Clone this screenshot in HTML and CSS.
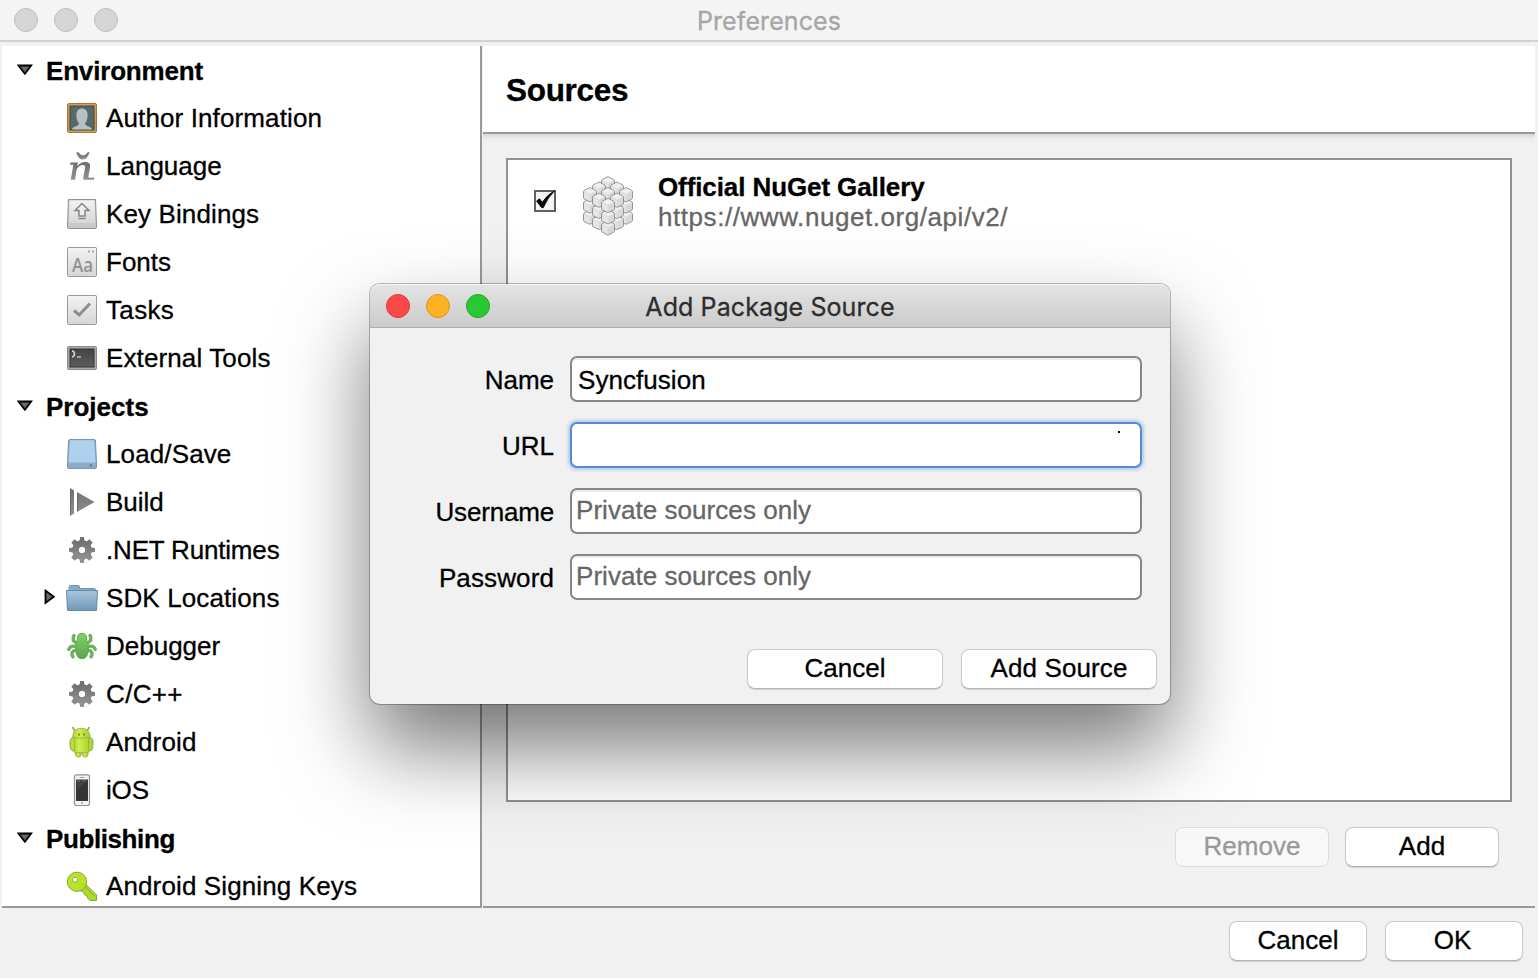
FILE: index.html
```html
<!DOCTYPE html>
<html lang="en">
<head>
<meta charset="utf-8">
<title>Preferences</title>
<link rel="stylesheet" href="styles.css">
</head>
<body>
<svg class="defs" width="0" height="0" aria-hidden="true">
  <defs>
    <linearGradient id="gGray" x1="0" y1="0" x2="0" y2="1"><stop offset="0" stop-color="#6e6e6e"/><stop offset="1" stop-color="#929292"/></linearGradient>
    <linearGradient id="gLight" x1="0" y1="0" x2="0" y2="1"><stop offset="0" stop-color="#f3f3f3"/><stop offset="1" stop-color="#d6d6d6"/></linearGradient>
    <linearGradient id="gGold" x1="0" y1="0" x2="0" y2="1"><stop offset="0" stop-color="#d9a055"/><stop offset=".85" stop-color="#c98d45"/><stop offset="1" stop-color="#dba65c"/></linearGradient>
    <linearGradient id="gFolder" x1="0" y1="0" x2="0" y2="1"><stop offset="0" stop-color="#a9c6dc"/><stop offset="1" stop-color="#7099ba"/></linearGradient>
    <linearGradient id="gBug" x1="0" y1="0" x2="0" y2="1"><stop offset="0" stop-color="#7cd36a"/><stop offset="1" stop-color="#5ba34c"/></linearGradient>
    <linearGradient id="gDroid" x1="0" y1="0" x2="1" y2="0"><stop offset="0" stop-color="#b0d52f"/><stop offset=".35" stop-color="#d0ee52"/><stop offset="1" stop-color="#a9d028"/></linearGradient>
    <linearGradient id="gDark" x1="0" y1="0" x2="0" y2="1"><stop offset="0" stop-color="#444"/><stop offset="1" stop-color="#5d5d5d"/></linearGradient>
    <symbol id="gear" viewBox="0 0 32 32">
      <g fill="url(#gGray)">
        <path fill-rule="evenodd" d="M14.2 3h3.6l.6 3.5 2.2.9 2.9-2.1 3.2 3.2-2.1 2.9.9 2.2 3.5.6v3.6l-3.5.6-.9 2.2 2.1 2.9-3.2 3.2-2.9-2.1-2.2.9-.6 3.5h-3.6l-.6-3.5-2.2-.9-2.9 2.1-3.2-3.2 2.1-2.9-.9-2.2L3 17.800v-3.600l3.500-.6.9-2.2-2.100-2.900 3.200-3.200 2.900 2.100 2.200-.9zM16 12.800a3.200 3.200 0 1 0 0 6.400a3.200 3.200 0 0 0 0-6.400z"/>
        <path fill-rule="evenodd" d="M16 6.300a9.700 9.700 0 1 0 0 19.400a9.700 9.700 0 0 0 0-19.400zM16 12.800a3.200 3.200 0 1 1 0 6.400a3.200 3.200 0 0 1 0-6.400z"/>
      </g>
    </symbol>
    <g id="cube">
      <path d="M0-6.900 5.700-4.100Q6.500-3.600 6.500-2.800V3.200Q6.500 4.100 5.700 4.500L.8 7Q0 7.300-.8 7L-5.700 4.500Q-6.500 4.100-6.500 3.200V-2.800Q-6.500-3.600-5.700-4.100z" fill="#dcdcdc" stroke="#8b8b8b" stroke-width=".9"/>
      <path d="M0-6.200 5.500-3.400 0-.5-5.500-3.400z" fill="#f0f0f0"/>
      <path d="M.5.5 5.800-2.200V3.500L.5 6.300z" fill="#d8d8d8"/>
      <path d="M-.5.500-5.800-2.200V3.500L-.5 6.300z" fill="#e6e6e6"/>
    </g>
  </defs>
</svg>

<div class="window">
  <header class="titlebar">
    <span class="lights"><i class="light"></i><i class="light"></i><i class="light"></i></span>
    <span class="title">Preferences</span>
  </header>

  <main class="content">
    <nav class="sidebar">
      <div class="row group"><svg class="tri" width="16" height="12"><path d="M1.500 1.500H14.200L7.900 9.800z" fill="#666" stroke="#000" stroke-width="1.800"/></svg><b class="tight">Environment</b></div>

      <div class="row"><svg class="icon" viewBox="0 0 32 32">
        <rect x="1.500" y="1.500" width="29" height="29" rx="1.500" fill="url(#gGold)" stroke="#a9773b"/>
        <rect x="4" y="4" width="24" height="24" fill="#55686d" stroke="#3f4a4b"/>
        <path d="M4.500 9Q10 6 16 9T27.500 9M4.500 14Q10 11 16 14T27.500 14M4.500 19Q10 16 16 19T27.500 19" fill="none" stroke="#5b6f73"/>
        <path d="M6 27.500C6 24.500 12.800 24.500 13 21.500C11.400 19.800 10.400 17 10.400 13C10.400 8.800 12.600 6.600 16 6.600S21.600 8.800 21.600 13C21.600 17 20.600 19.800 19 21.500C19.200 24.500 26 24.500 26 27.500z" fill="#b6c1c2"/>
      </svg><span class="loose">Author Information</span></div>

      <div class="row"><svg class="icon" viewBox="0 0 32 32">
        <g fill="url(#gGray)">
          <path d="M10.300 2.200H12.300Q14.500 5.300 18 5.200Q20.200 4.600 21.700 2.200H23.600Q21.500 9.400 16.800 9.600Q12.200 9.500 10.300 2.200z"/>
          <path d="M4.500 12.400H12L11.300 16.200Q14.500 12.100 19.300 12Q24.800 12 24.100 17L22.400 26.300Q22.200 27.700 23.400 27.700L28.400 27.600L28 29.800H18.300Q16.900 29.600 17.200 27.800L19 18Q19.500 15 17 15Q13.200 15 10.700 19.600L9 29.800H4.700L7.400 14.700H4z"/>
        </g>
      </svg><span>Language</span></div>

      <div class="row"><svg class="icon" viewBox="0 0 32 32">
        <path d="M2.500 1.500H29.500L30.500 27V29Q30.500 30.500 29 30.500H3Q1.500 30.500 1.500 29V27z" fill="#c9c9c9" stroke="#929292"/>
        <path d="M3.500 2.500H28.500L29.200 25H2.800z" fill="url(#gLight)"/>
        <path d="M16 5.500 23 12.500H19V18H13V12.500H9z" fill="#eee" stroke="#858585" stroke-width="1.500"/><path d="M12.500 20.500H19.500" stroke="#858585" stroke-width="1.500"/>
      </svg><span class="loose">Key Bindings</span></div>

      <div class="row"><svg class="icon" viewBox="0 0 32 32">
        <rect x="1.500" y="1.500" width="29" height="29" rx="1" fill="url(#gLight)" stroke="#999"/>
        <path d="M22 4.500h2v2h-2zM26 4.500h2v2h-2z" fill="#aaa"/>
        <text x="6" y="26" class="aa" textLength="21" lengthAdjust="spacingAndGlyphs">Aa</text>
      </svg><span>Fonts</span></div>

      <div class="row"><svg class="icon" viewBox="0 0 32 32">
        <rect x="1.500" y="1.500" width="29" height="29" rx="1" fill="url(#gLight)" stroke="#999"/>
        <path d="M8 16.500 13.200 21 24 9.500" fill="none" stroke="#8d8d8d" stroke-width="3"/>
      </svg><span class="looser">Tasks</span></div>

      <div class="row"><svg class="icon" viewBox="0 0 32 32">
        <rect x="1.500" y="4.500" width="29" height="23" rx="1" fill="#aaa" stroke="#8b8b8b"/>
        <rect x="4" y="7" width="24" height="18" fill="url(#gDark)" stroke="#333"/>
        <path d="M6 9Q8.500 9.200 8.500 12Q8.500 14.700 6 15" fill="none" stroke="#d4d4d4" stroke-width="1.500"/><path d="M11 15h4" stroke="#ccc" stroke-width="1.300"/>
      </svg><span class="loose">External Tools</span></div>

      <div class="row group"><svg class="tri" width="16" height="12"><path d="M1.500 1.500H14.200L7.900 9.800z" fill="#666" stroke="#000" stroke-width="1.800"/></svg><b>Projects</b></div>

      <div class="row"><svg class="icon" viewBox="0 0 32 32">
        <path d="M4 1.500H28Q29.500 1.500 29.500 3L30.500 25V29Q30.500 30.500 29 30.500H3Q1.500 30.500 1.500 29V25L2.500 3Q2.500 1.500 4 1.500z" fill="#8badca" stroke="#7896b1"/>
        <path d="M4 2.300H28L29.500 24.500H2.500z" fill="#afd1ed"/><path d="M24 26.500h2v2h-2z" fill="#4f718f"/>
      </svg><span class="loose">Load/Save</span></div>

      <div class="row"><svg class="icon" viewBox="0 0 32 32">
        <path d="M4 2 8 4.500V27.500L4 30zM11 6 28.500 16 11 26z" fill="url(#gGray)"/><path d="M4.500 3V29M11.500 7V25" stroke="#686868"/>
      </svg><span>Build</span></div>

      <div class="row"><svg class="icon"><use href="#gear"/></svg><span class="tight">.NET Runtimes</span></div>

      <div class="row nested"><svg class="tri" width="12" height="16"><path d="M1.500 1.600V14L9.800 7.800z" fill="#666" stroke="#000" stroke-width="1.800"/></svg><svg class="icon" viewBox="0 0 32 32">
        <path d="M3 8V5Q3 3.500 4.500 3.500H12Q13.500 3.500 13.500 5V6.500H28Q29.500 6.500 29.500 8V10H3z" fill="#86abc7" stroke="#7196b4"/>
        <path d="M.5 8.500H31.500L30.500 28.500H1.500z" fill="url(#gFolder)" stroke="#628baa"/>
      </svg><span class="loose">SDK Locations</span></div>

      <div class="row"><svg class="icon" viewBox="0 0 32 32">
        <g fill="none" stroke="#6db15d" stroke-width="3.400" stroke-linecap="round" stroke-linejoin="round"><path d="M11 13.500 7.300 10.500V7L8 5.500M21 13.500 24.700 10.500V7L24 5.500M10.500 17Q4.500 14.500 2.700 19.500M21.500 17Q27.500 14.500 29.300 19.500M11 21Q5.500 19.500 6 25L7 26.800M21 21Q26.500 19.500 26 25L25 26.800"/></g>
        <path d="M11.500 8Q11.500 3.300 16 3.300T20.500 8V10Q22.300 12 22.300 18Q22.300 28.800 16 28.800T9.700 18Q9.700 12 11.500 10z" fill="url(#gBug)" stroke="#62ac52"/>
      </svg><span>Debugger</span></div>

      <div class="row"><svg class="icon"><use href="#gear"/></svg><span class="looser">C/C++</span></div>

      <div class="row"><svg class="icon" viewBox="0 0 32 32">
        <g stroke="#93ac45" stroke-width=".9" fill="url(#gDroid)">
          <path d="M9 5 6.500 1M21 5 23.500 1" fill="none" stroke-width="1.700"/>
          <rect x="9.500" y="22" width="5.500" height="9" rx="2.700"/><rect x="16.500" y="22" width="5.500" height="9" rx="2.700"/>
          <path d="M7.300 11H23.700V23.500Q23.700 26.800 20.500 26.800H10.500Q7.300 26.800 7.300 23.500z"/>
          <path d="M6.700 11.500C6.700 5.500 10 2.300 15.300 2.300S24 5.500 24 11.500Q15.500 13 6.700 11.500z"/>
          <path d="M8.700 20.500Q8.700 25.300 6 24.800Q4 23.500 4 19V14.500Q4.500 11.500 7 11.800Q8.700 12.500 8.700 15zM22.500 20.500Q22.500 25.300 25 24.800Q27 23.500 27 19V14.500Q26.500 11.500 24 11.800Q22.500 12.500 22.500 15z"/>
        </g>
        <path d="M12 7.500h2v2h-2zM17 7.500h2v2h-2z" fill="#768f25"/>
      </svg><span class="loose">Android</span></div>

      <div class="row"><svg class="icon" viewBox="0 0 32 32">
        <rect x="8.500" y=".8" width="15" height="30.700" rx="2" fill="#f3f3f3" stroke="#929292" stroke-width="1.200"/>
        <path d="M10 5.500H22V27H10z" fill="#353535"/><path d="M11 6H21.500L11 16z" fill="#424242"/><path d="M13.500 3.500h5" stroke="#aaa"/><path d="M11 7h3M17 7h4" stroke="#999" stroke-width=".8" stroke-dasharray="1"/><path d="M15 28.300h2v1.700h-2z" fill="#aaa"/>
      </svg><span class="tight">iOS</span></div>

      <div class="row group"><svg class="tri" width="16" height="12"><path d="M1.500 1.500H14.200L7.900 9.800z" fill="#666" stroke="#000" stroke-width="1.800"/></svg><b class="tighter">Publishing</b></div>

      <div class="row"><svg class="icon" viewBox="0 0 32 32">
        <path d="M18.500 13 30.500 25V30.500H24L21.500 28V26L19.500 25.500 18 24V22L16 21.500 12.500 19.500z" fill="#addb2a" stroke="#8aa63a"/>
        <path fill-rule="evenodd" d="M11 2.200A9.600 9.600 0 1 1 10.900 2.200zM9 7.300a2.500 2.500 0 1 0 .1 0z" fill="#b9e329" stroke="#8aa63a"/>
        <path d="M17 13 14.500 18.500" stroke="#b5e029" stroke-width="4"/><path d="M19.500 17 29 26.500" stroke="#84a833"/>
      </svg><span class="loose">Android Signing Keys</span></div>
    </nav>

    <section class="panel">
      <h1 class="heading">Sources</h1>
      <div class="body">
        <div class="list">
          <svg class="check" width="24" height="24" viewBox="0 0 24 24"><rect x="2" y="2" width="20" height="20" fill="#f4f4f4" stroke="#606060" stroke-width="2"/><path d="M3.500 12 6.500 9.700 9.300 13.300Q14 6 21.500 1.800Q14.500 9 10.300 18.700H8.700z" stroke="#000" stroke-width=".8"/></svg>
          <svg class="package" width="52" height="60" viewBox="0 0 52 60">
            <use href="#cube" x="8" y="41"/><use href="#cube" x="44" y="41"/><use href="#cube" x="17" y="46.300"/><use href="#cube" x="35" y="46.300"/><use href="#cube" x="26" y="51.700"/>
            <use href="#cube" x="8" y="29.700"/><use href="#cube" x="44" y="29.700"/><use href="#cube" x="17" y="35.200"/><use href="#cube" x="35" y="35.200"/><use href="#cube" x="26" y="40.700"/>
            <use href="#cube" x="26" y="7.600"/><use href="#cube" x="17" y="13"/><use href="#cube" x="35" y="13"/><use href="#cube" x="8" y="18.500"/><use href="#cube" x="26" y="18.500"/><use href="#cube" x="44" y="18.500"/><use href="#cube" x="17" y="24"/><use href="#cube" x="35" y="24"/><use href="#cube" x="26" y="29.300"/>
          </svg>
          <div class="source"><b class="source-name">Official NuGet Gallery</b><span class="source-url">https://www.nuget.org/api/v2/</span></div>
        </div>
        <div class="actions"><button class="btn wide" disabled>Remove</button><button class="btn wide">Add</button></div>
      </div>
    </section>
  </main>

  <footer class="footer"><button class="btn">Cancel</button><button class="btn ok">OK</button></footer>
</div>

<div class="dialog">
  <header class="dialog-bar">
    <span class="lights"><i class="light red"></i><i class="light amber"></i><i class="light green"></i></span>
    <span class="title">Add Package Source</span>
  </header>
  <form class="form">
    <label class="field"><span>Name</span><input value="Syncfusion"></label>
    <label class="field focus"><span>URL</span><input><i class="dot"></i></label>
    <label class="field"><span class="tight">Username</span><input placeholder="Private sources only"></label>
    <label class="field"><span class="loose">Password</span><input placeholder="Private sources only"></label>
  </form>
  <div class="dialog-actions"><button class="btn">Cancel</button><button class="btn loose">Add Source</button></div>
</div>
</body>
</html>
```
FILE: styles.css
```css
* { box-sizing: border-box; }
body { margin: 0; width: 1538px; height: 978px; overflow: hidden; position: relative; background: #f1f1f1; color: #000; font: 26px/30px "Liberation Sans", Arial, sans-serif; -webkit-text-stroke: .3px; }
.defs { position: absolute; }
.window { height: 978px; display: flex; flex-direction: column; }
.loose { letter-spacing: .12px; }
.looser { letter-spacing: .35px; }
.tight { letter-spacing: -.18px; }
.tighter { letter-spacing: -.4px; }

.titlebar { height: 42px; flex: none; display: grid; grid-template-columns: 200px 1fr 200px; align-items: center; background: #f4f4f4; border-bottom: 2px solid #d1d1d1; }
.title { font: 25px/30px Inter, sans-serif; letter-spacing: .1px; text-align: center; white-space: nowrap; }
.titlebar .title { color: #a6a6a6; padding-top: 2px; }
.lights { display: flex; gap: 16px; padding-left: 14px; }
.light { width: 24px; height: 24px; border-radius: 50%; background: #d5d5d5; border: 1px solid #bfbfbf; }
.red { background: #fc4848; border-color: #df3538; }
.amber { background: #fdb225; border-color: #dc9223; }
.green { background: #2ac833; border-color: #1ea623; }

.content { height: 866px; flex: none; display: flex; padding: 4px 3px 0 2px; }
.sidebar { width: 480px; height: 862px; overflow: hidden; background: #fff; border-right: 2px solid #999; border-bottom: 2px solid #999; }
.row { height: 48px; display: flex; align-items: center; padding-left: 64px; white-space: nowrap; }
.icon { width: 32px; height: 32px; margin-right: 8px; flex: none; }
.group { padding-left: 15px; }
.group b { margin: 2px 0 0 13px; }
.group .tri { margin-top: -1px; }
.nested { padding-left: 42px; }
.nested .tri { margin: -2px 10px 0 0; }
.aa { font: 600 19px "Open Sans", sans-serif; fill: #929292; }

.panel { flex: 1; margin-left: 1px; display: flex; flex-direction: column; border-bottom: 2px solid #999; }
.heading { margin: 0; height: 88px; flex: none; padding: 27px 0 0 23px; font-size: 31.5px; line-height: 34px; letter-spacing: -.3px; background: #fff; border-bottom: 2px solid #999; }
.body { flex: 1; padding: 24px 23px 0; background: linear-gradient(#d7d7d7, #ececec 5px, #f1f1f1 9px); }
.list { height: 644px; display: flex; align-items: flex-start; padding: 12px 0 0 25px; background: #fff; border: 2px solid #919191; }
.check { margin-top: 17px; }
.package { margin: 4px 24px 0 25px; }
.source { display: flex; flex-direction: column; }
.source-name { letter-spacing: -.1px; }
.source-url { color: #666; letter-spacing: .56px; }
.actions { display: flex; justify-content: flex-end; gap: 16px; padding: 25px 13px 0 0; }

.btn { width: 138px; height: 40px; padding: 0 0 2px; font: inherit; color: #000; background: #fff; border: 1px solid #cbcbcb; border-bottom-color: #b5b5b5; border-radius: 8px; box-shadow: 0 1px 1px rgba(0, 0, 0, .14); }
.btn.wide { width: 154px; }
.btn.ok { padding-right: 3px; }
.btn:disabled { color: #999; background: #f8f8f8; border-color: #dcdcdc; box-shadow: none; }
.footer { display: flex; justify-content: flex-end; gap: 18px; padding: 13px 15px 0 0; }

.dialog { position: absolute; left: 370px; top: 284px; width: 800px; height: 420px; background: #f1f1f1; border-radius: 10px; box-shadow: 0 0 0 1px rgba(0, 0, 0, .25), 0 44px 84px rgba(0, 0, 0, .53); }
.dialog-bar { height: 44px; display: grid; grid-template-columns: 200px 1fr 200px; align-items: center; background: linear-gradient(#e4e4e4, #cbcbcb); border-bottom: 1px solid #acacac; border-radius: 10px 10px 0 0; box-shadow: inset 0 1px #f4f4f4; }
.dialog-bar .lights { padding: 1px 0 0 16px; }
.dialog-bar .title { color: #2d2d2d; padding-top: 2px; }
.form { display: flex; flex-direction: column; gap: 20px; padding: 28px 28px 0 0; }
.field { position: relative; display: grid; grid-template-columns: 184px 572px; gap: 16px; align-items: center; height: 46px; }
.field span { text-align: right; padding-top: 2px; }
.field input { width: 572px; height: 46px; padding: 2px 6px 0; font: inherit; letter-spacing: .05px; color: #000; background: #fff; border: 2px solid #878787; border-radius: 7px; outline: 0; box-shadow: inset 0 2px #ececec; }
.field input::placeholder { color: #666; opacity: 1; transform: translate(-2px, -2px); }
.focus input { border-color: #548bcd; box-shadow: 0 0 0 2px #c3d5e9, 0 0 0 4px #e0e7ef; }
.dot { position: absolute; right: 22px; top: 9px; width: 2px; height: 2px; background: #000; }
.dialog-actions { display: flex; justify-content: flex-end; gap: 18px; padding: 49px 13px 0 0; }
.dialog-actions .btn { width: 196px; }
```
